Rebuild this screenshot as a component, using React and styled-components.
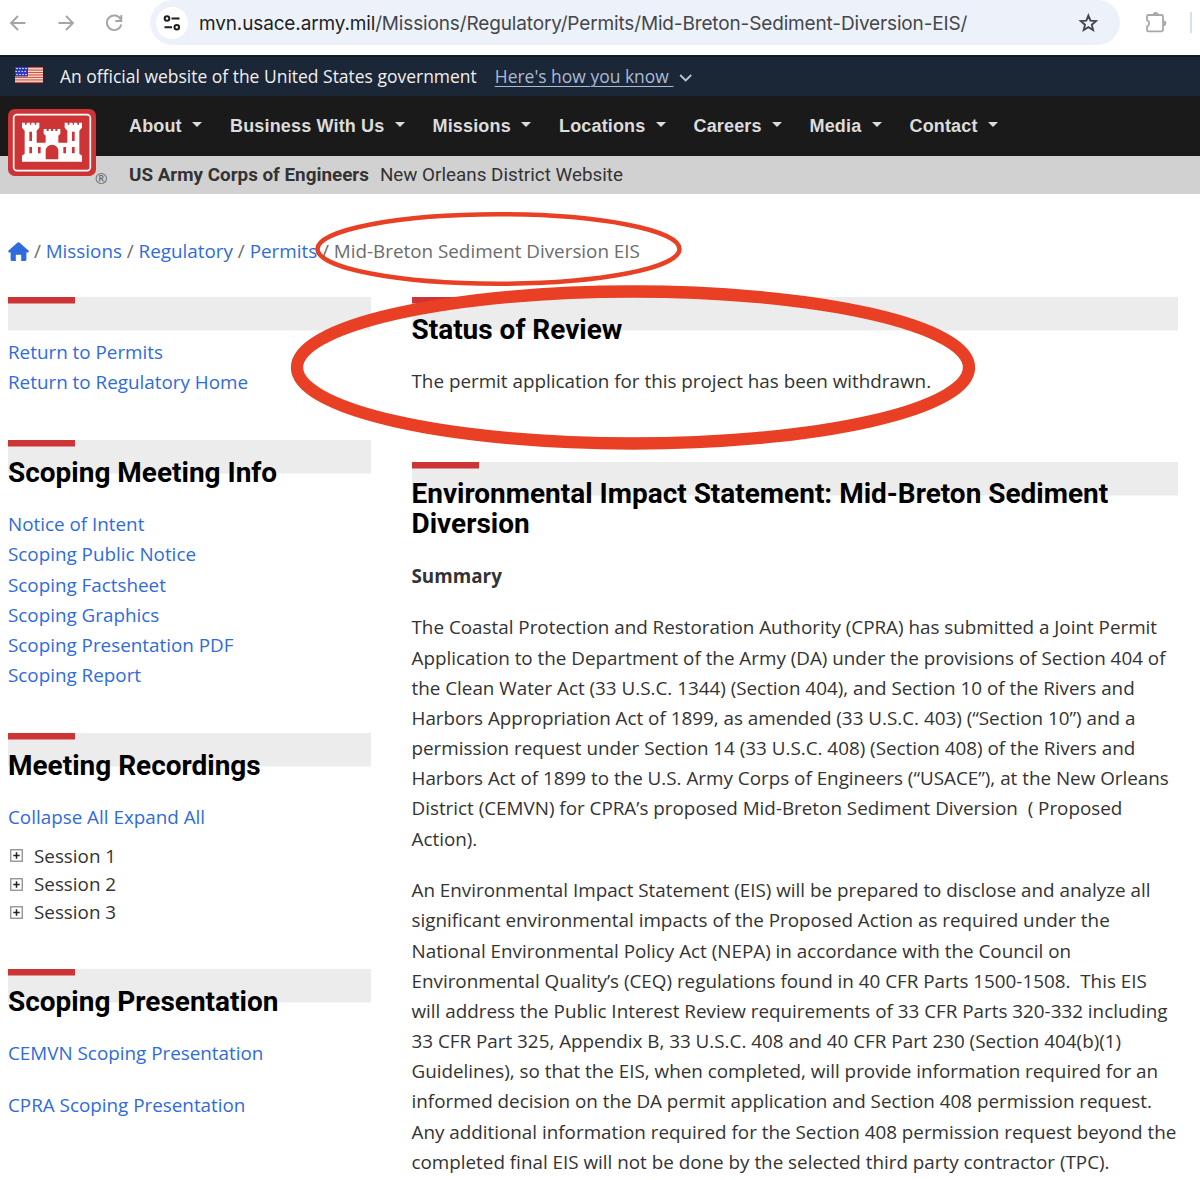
import React from "react";
import styled, { createGlobalStyle } from "styled-components";

const Global = createGlobalStyle`
  * { box-sizing: border-box; }
  body { margin: 0; background: #fff; overflow: hidden; }
`;

const sans = `"Open Sans", "Noto Sans", sans-serif`;
const roboto = `Roboto, "Liberation Sans", sans-serif`;

const Page = styled.div`
  position: relative;
  width: 1200px;
  height: 1180px;
  overflow: hidden;
  background: #fff;
  color: #333;
  font: 400 18.84px/30.17px ${sans};
`;

const BrowserBar = styled.div`
  display: flex;
  height: 55px;
  align-items: flex-start;
  background: #fff;
`;
const NavIcons = styled.div`
  display: flex;
  gap: 24px;
  width: 150px;
  height: 45px;
  align-items: center;
  padding-left: 6px;
`;
const AddressPill = styled.div`
  display: flex;
  align-items: center;
  width: 970px;
  height: 45px;
  padding: 0 20px 0 6px;
  background: #edf1f9;
  border-radius: 22.5px;
`;
const SiteInfo = styled.span`
  display: grid;
  place-items: center;
  width: 32px;
  height: 32px;
  border-radius: 50%;
  background: #fff;
`;
const Url = styled.span`
  flex: 1;
  margin: 2px 0 0 11px;
  font: 400 19px/28px Inter, Roboto, sans-serif;
  letter-spacing: -0.145px;
  color: #44474b;
  white-space: nowrap;
  b { font-weight: 400; color: #1d1f22; }
`;
const Extras = styled.div`
  display: flex;
  align-items: center;
  height: 45px;
  padding-left: 24px;
  gap: 22px;
`;
const Divider = styled.span`
  width: 2px;
  height: 21px;
  background: #d5defa;
`;

const GovBanner = styled.div`
  display: flex;
  align-items: center;
  height: 41px;
  padding: 0 0 0 15px;
  background: #1b2637;
  border-top: 2px solid #121a29;
  color: #f0f0f0;
  font-size: 17.48px;
  white-space: nowrap;
  svg { flex: none; }
`;
const FlagSlot = styled.span`
  display: flex;
  margin-top: -4px;
`;
const GovText = styled.span`
  margin-left: 17px;
`;
const KnowLink = styled.a`
  margin: 0 6px 0 18px;
  color: #a9bad6;
  text-decoration: underline;
  text-underline-offset: 3px;
  text-decoration-thickness: 1px;
  white-space: pre;
`;

const Masthead = styled.header`
  display: grid;
  grid-template-columns: 129px 1fr;
  grid-template-rows: 60px 38px;
  background: linear-gradient(#1a1a1a 60px, #d1d1d1 60px);
`;
const LogoCell = styled.div`
  grid-row: 1 / 3;
  display: flex;
  align-items: flex-start;
  padding: 13px 0 0 8px;
`;
const Registered = styled.span`
  align-self: flex-end;
  margin: 0 0 6px -1px;
  font: 400 15px/20px ${sans};
  color: #666;
`;
const Menu = styled.nav`
  display: flex;
  align-items: center;
  gap: 28px;
`;
const MenuItem = styled.a`
  display: flex;
  align-items: center;
  width: ${(p) => p.$w}px;
  justify-content: space-between;
  color: #dcdcdc;
  font: 700 18px/24px "Liberation Sans", Arial, sans-serif;
  letter-spacing: 0.16px;
  white-space: nowrap;
  &::after {
    content: "";
    border: 5.5px solid transparent;
    border-top-color: #dcdcdc;
    border-bottom: 0;
    margin-top: -3px;
  }
`;
const SiteName = styled.div`
  display: flex;
  align-items: center;
  gap: 11px;
  color: #333;
  font: 400 18.84px/24px ${roboto};
  white-space: nowrap;
`;

const Crumbs = styled.div`
  display: flex;
  align-items: center;
  gap: 4.9px;
  height: 30px;
  margin: 42px 0 31px 8px;
  color: #6c6c6c;
  white-space: nowrap;
`;
const Link = styled.a`
  color: #2f6bdc;
`;

const Columns = styled.main`
  display: grid;
  grid-template-columns: 363px 766px;
  column-gap: 40.5px;
  padding-left: 8px;
`;
const Section = styled.section`
  height: ${(p) => (p.$h ? p.$h + "px" : "auto")};
  padding-top: ${(p) => p.$top ?? 17.8}px;
  background:
    linear-gradient(#cc3435, #cc3435) 0 0 / 67px 6.5px no-repeat,
    linear-gradient(#ececec, #ececec) 0 0 / 100% 33.5px no-repeat;
`;
const Title = styled.h2`
  margin: 0 0 21.4px;
  color: #000;
  font: 700 27.97px/30px ${roboto};
  white-space: nowrap;
`;
const Text = styled.p`
  margin: 0 0 21.5px;
  white-space: pre;
`;
const Line = styled.span`
  display: block;
`;
const LinkList = styled.div`
  display: flex;
  flex-direction: column;
  gap: ${(p) => p.$gap || 0}px;
`;
const Sessions = styled.ul`
  list-style: none;
  margin: 9.5px 0 0;
  padding: 0 0 0 2px;
`;
const Session = styled.li`
  display: flex;
  align-items: center;
  gap: 11px;
  height: 28.2px;
`;
const Annotations = styled.svg`
  position: absolute;
  left: 0;
  top: 0;
  pointer-events: none;
`;

const Icon = ({ w = 20, h = w, box, children, ...rest }) => (
  <svg width={w} height={h} viewBox={box || `0 0 ${w} ${h}`} fill="none" {...rest}>{children}</svg>
);

const Back = () => (
  <Icon w={24} stroke="#a5a5a5" strokeWidth="1.9"><path d="M19.5 12H5M12 5l-7 7 7 7" /></Icon>
);
const Forward = () => (
  <Icon w={24} stroke="#a5a5a5" strokeWidth="1.9"><path d="M4.5 12H19M12 5l7 7-7 7" /></Icon>
);
const Reload = () => (
  <Icon w={24} stroke="#a5a5a5" strokeWidth="1.9">
    <path d="M18.6 8.2A7.3 7.3 0 1 0 19.3 13.5M19.3 4v6h-6" />
  </Icon>
);
const Tune = () => (
  <Icon w={18} h={18} stroke="#1f1f1f" strokeWidth="2">
    <circle cx="4" cy="4.5" r="2.3" /><path d="M8.5 4.5H16.5M1.5 13.2H9" /><circle cx="13.8" cy="13.2" r="2.3" />
  </Icon>
);
const Star = () => (
  <Icon w={24} stroke="#44474b" strokeWidth="1.9" strokeLinejoin="miter">
    <path d="M12.4 4.6l2.1 5.1 5.5.4-4.2 3.6 1.3 5.4-4.7-2.9-4.7 2.9 1.3-5.4-4.2-3.6 5.5-.4z" />
  </Icon>
);
const Puzzle = () => (
  <Icon w={24} h={24} stroke="#a8a8a8" strokeWidth="1.8" strokeLinejoin="round">
    <path d="M4.300 4H17.500a1.500 1.500 0 0 1 1.500 1.500V18.900a1.500 1.500 0 0 1-1.500 1.500H4.300a1.300 1.300 0 0 1-1.300-1.300V15.600a3.500 3.500 0 0 0 0-6.500V5.300a1.300 1.300 0 0 1 1.300-1.300z" />
    <path fill="#a8a8a8" stroke="none" d="M8.900 3.800a2.800 2.800 0 0 1 5.600 0zM19.500 9.500a2.800 2.800 0 0 1 0 5.600z" />
  </Icon>
);
const Flag = () => (
  <Icon w={28} h={16}>
    <rect width="28" height="16" fill="#f6ece8" />
    {[0, 1, 2, 3, 4, 5, 6].map((i) => <rect key={i} y={i * 2.46} width="28" height="1.25" fill="#d8543f" />)}
    <rect width="13" height="9.5" fill="#2a36b8" />
    {[1.5, 4.5, 7.5].map((y, r) => [2, 5, 8, 11].map((x) => <circle key={x + "-" + y} cx={r === 1 ? x - 0.8 : x} cy={y} r=".75" fill="#fff" />))}
  </Icon>
);
const Chevron = () => (
  <Icon w={14} h={14} stroke="#b9c7de" strokeWidth="1.8"><path d="M1.2 5l5.500 5.500 5.500-5.500" /></Icon>
);
const Castle = () => (
  <Icon w={88} h={67} box="24 42 264 201">
    <rect x="24" y="42" width="264" height="201" rx="20" fill="#cc3435" />
    <rect x="41" y="59" width="230" height="168" rx="10" stroke="#fff" strokeWidth="5" />
    <path fill="#fff" d="M66 83H75V89H80V83H90V89H94V83H104V89H109V83H118V98L110 107V143H137V122L131 116V102H140V108H146V102H153V108H159V102H166V108H172V102H181V116L175 122V143H202V107L194 98V83H203V89H208V83H218V89H222V83H232V89H237V83H246V98L238 107V176L246 182V200H66V182L74 176V107L66 98Z" />
    <path fill="#cc3435" d="M88 110h8v28h-8zM216 110h8v28h-8zM88 156h8v19h-8zM114 156h8v19h-8zM190 156h8v19h-8zM216 156h8v19h-8zM137 193v-25a19 19 0 0 1 38 0v25z" />
  </Icon>
);
const Home = () => (
  <Icon w={21} h={19}>
    <path fill="#2f6bdc" d="M9.6.6a1.4 1.4 0 0 1 1.8 0l9 8c.8.8.4 1.8-.6 1.8h-1.4v7.2c0 .8-.5 1.3-1.3 1.3h-3.9v-5.2c0-.7-.4-1-1-1H8.8c-.6 0-1 .3-1 1v5.2H3.9c-.8 0-1.3-.5-1.3-1.3v-7.2H1.2c-1 0-1.4-1-.6-1.8z" />
  </Icon>
);
const Plus = () => (
  <Icon w={13} h={13}>
    <rect x=".75" y=".75" width="11.5" height="11.5" stroke="#8e8e8e" strokeWidth="1.3" />
    <path d="M6.5 3.3v6.4M3.3 6.5h6.4" stroke="#222" strokeWidth="1.5" />
  </Icon>
);

const menu = [["About", 73], ["Business With Us", 174.5], ["Missions", 98.5], ["Locations", 106.5], ["Careers", 88], ["Media", 72], ["Contact", 88]];
const scoping = ["Notice of Intent", "Scoping Public Notice", "Scoping Factsheet", "Scoping Graphics", "Scoping Presentation PDF", "Scoping Report"];
const summary = [
  "The Coastal Protection and Restoration Authority (CPRA) has submitted a Joint Permit",
  "Application to the Department of the Army (DA) under the provisions of Section 404 of",
  "the Clean Water Act (33 U.S.C. 1344) (Section 404), and Section 10 of the Rivers and",
  "Harbors Appropriation Act of 1899, as amended (33 U.S.C. 403) (“Section 10”) and a",
  "permission request under Section 14 (33 U.S.C. 408) (Section 408) of the Rivers and",
  "Harbors Act of 1899 to the U.S. Army Corps of Engineers (“USACE”), at the New Orleans",
  "District (CEMVN) for CPRA’s proposed Mid-Breton Sediment Diversion  ( Proposed",
  "Action).",
];
const eis = [
  "An Environmental Impact Statement (EIS) will be prepared to disclose and analyze all",
  "significant environmental impacts of the Proposed Action as required under the",
  "National Environmental Policy Act (NEPA) in accordance with the Council on",
  "Environmental Quality’s (CEQ) regulations found in 40 CFR Parts 1500-1508.  This EIS",
  "will address the Public Interest Review requirements of 33 CFR Parts 320-332 including",
  "33 CFR Part 325, Appendix B, 33 U.S.C. 408 and 40 CFR Part 230 (Section 404(b)(1)",
  "Guidelines), so that the EIS, when completed, will provide information required for an",
  "informed decision on the DA permit application and Section 408 permission request.",
  "Any additional information required for the Section 408 permission request beyond the",
  "completed final EIS will not be done by the selected third party contractor (TPC).",
];

export default function App() {
  return (
    <Page>
      <Global />
      <BrowserBar>
        <NavIcons><Back /><Forward /><Reload /></NavIcons>
        <AddressPill>
          <SiteInfo><Tune /></SiteInfo>
          <Url><b>mvn.usace.army.mil</b>/Missions/Regulatory/Permits/Mid-Breton-Sediment-Diversion-EIS/</Url>
          <Star />
        </AddressPill>
        <Extras><Puzzle /><Divider /></Extras>
      </BrowserBar>
      <GovBanner>
        <FlagSlot><Flag /></FlagSlot>
        <GovText>An official website of the United States government</GovText>
        <KnowLink>{"Here's how you know "}</KnowLink>
        <Chevron />
      </GovBanner>
      <Masthead>
        <LogoCell><Castle /><Registered>®</Registered></LogoCell>
        <Menu>{menu.map(([name, w]) => <MenuItem key={name} $w={w}>{name}</MenuItem>)}</Menu>
        <SiteName><b>US Army Corps of Engineers</b><span>New Orleans District Website</span></SiteName>
      </Masthead>
      <Crumbs>
        <Home />/<Link>Missions</Link>/<Link>Regulatory</Link>/<Link>Permits</Link>/<span>Mid-Breton Sediment Diversion EIS</span>
      </Crumbs>
      <Columns>
        <div>
          <Section $h={143} $top={39.5}>
            <LinkList><Link>Return to Permits</Link><Link>Return to Regulatory Home</Link></LinkList>
          </Section>
          <Section $h={293}>
            <Title>Scoping Meeting Info</Title>
            <LinkList>{scoping.map((t) => <Link key={t}>{t}</Link>)}</LinkList>
          </Section>
          <Section $h={236}>
            <Title>Meeting Recordings</Title>
            <Link>Collapse All</Link> <Link>Expand All</Link>
            <Sessions>{[1, 2, 3].map((n) => <Session key={n}><Plus />Session {n}</Session>)}</Sessions>
          </Section>
          <Section>
            <Title>Scoping Presentation</Title>
            <LinkList $gap={21.5}><Link>CEMVN Scoping Presentation</Link><Link>CPRA Scoping Presentation</Link></LinkList>
          </Section>
        </div>
        <div>
          <Section $h={164.5}>
            <Title>Status of Review</Title>
            <Text>The permit application for this project has been withdrawn.</Text>
          </Section>
          <Section>
            <Title>Environmental Impact Statement: Mid-Breton Sediment<br />Diversion</Title>
            <Text><b>Summary</b></Text>
            <Text>{summary.map((t) => <Line key={t}>{t}</Line>)}</Text>
            <Text>{eis.map((t) => <Line key={t}>{t}</Line>)}</Text>
          </Section>
        </div>
      </Columns>
      <Annotations width="1200" height="1180" fill="none" stroke="#e93f24">
        <ellipse cx="498.5" cy="249" rx="181" ry="34.7" strokeWidth="4.5" />
        <ellipse cx="633" cy="367.5" rx="336" ry="76" strokeWidth="12.3" />
      </Annotations>
    </Page>
  );
}
